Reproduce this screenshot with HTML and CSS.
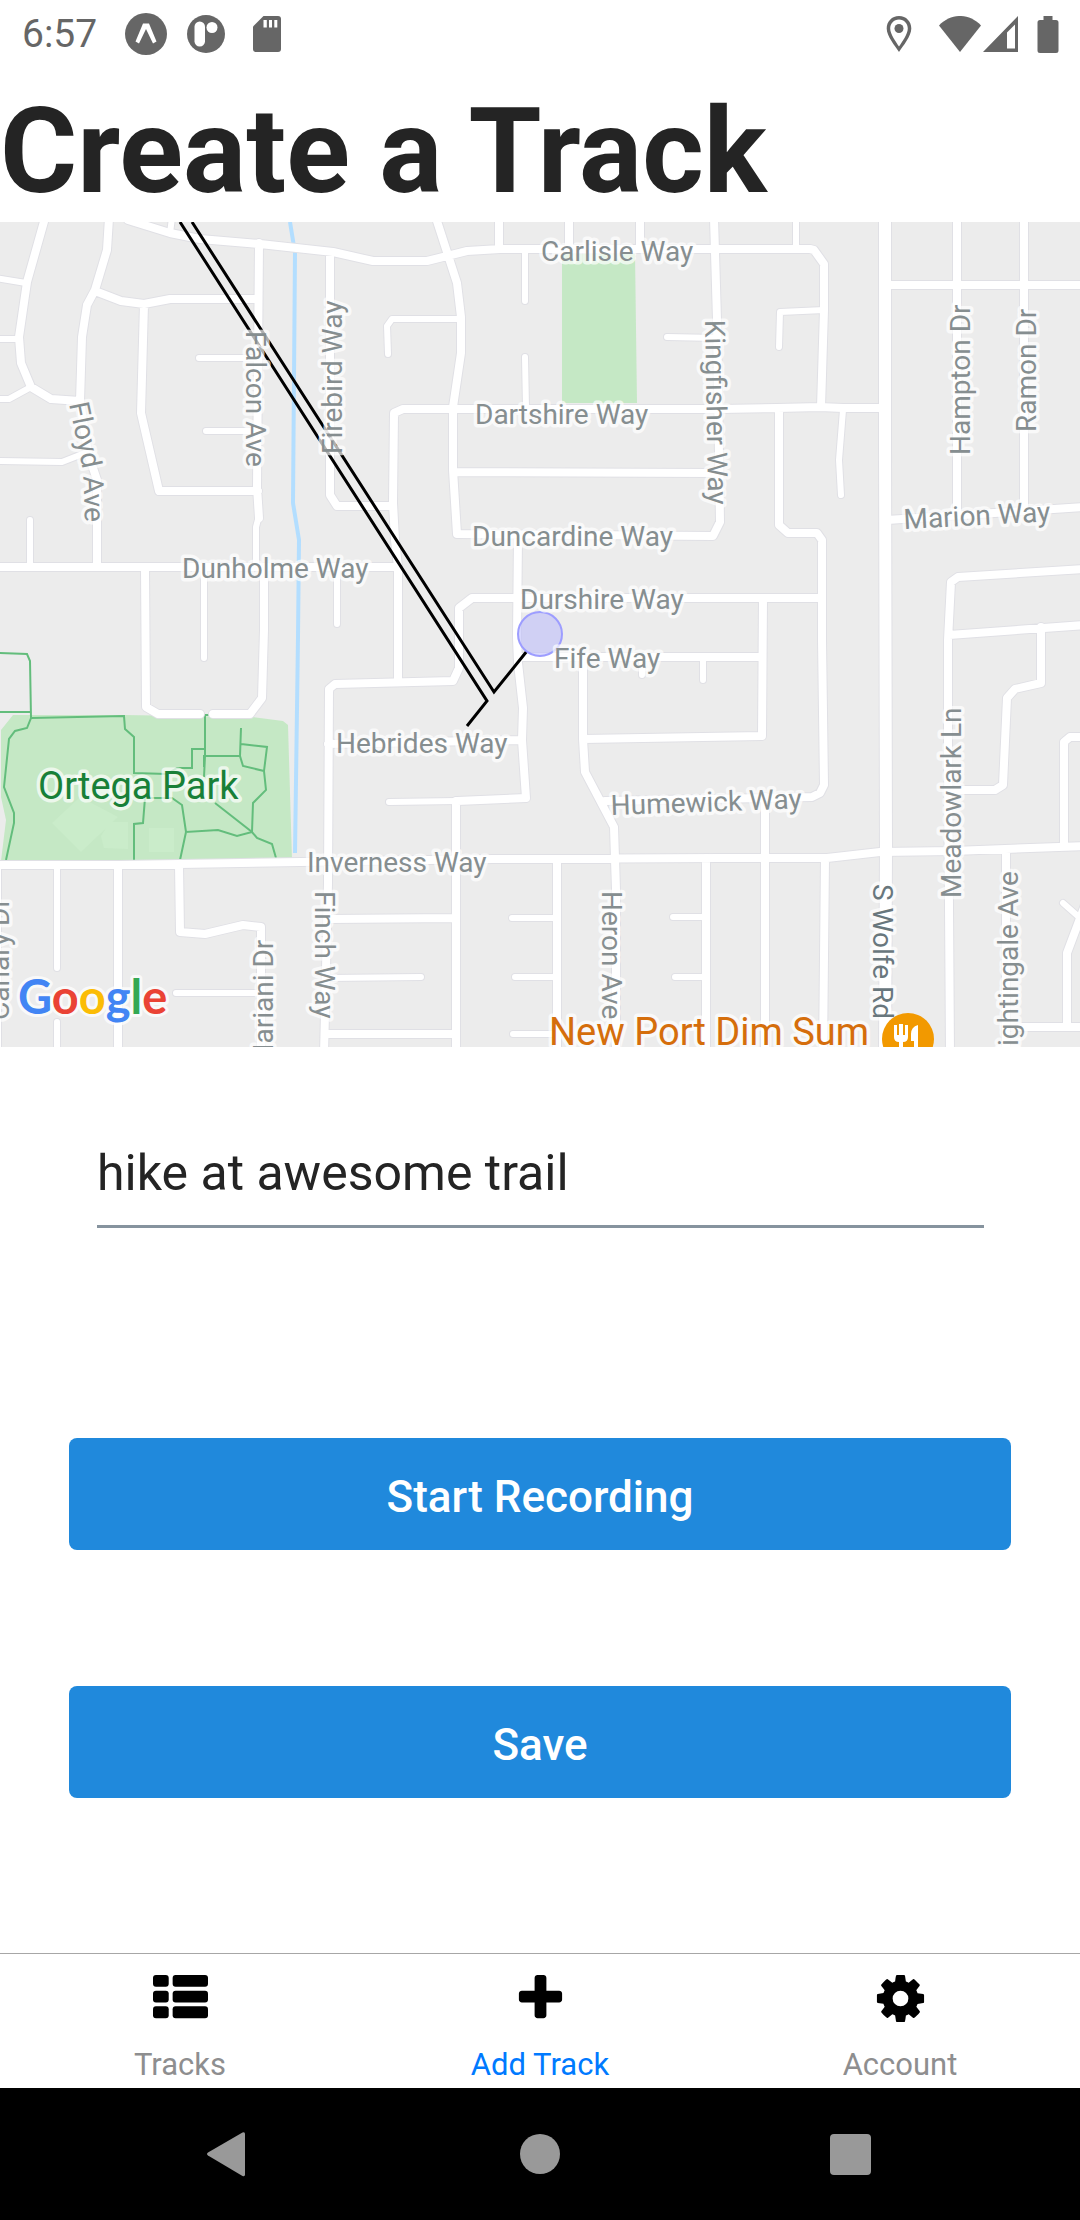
FILE: index.html
```html
<!DOCTYPE html>
<html lang="en">
<head>
<meta charset="utf-8">
<meta name="viewport" content="width=device-width, initial-scale=1">
<title>Create a Track</title>
<link rel="stylesheet" href="styles.css">
</head>
<body>
<header class="status">
  <div class="status-left">
    <span class="clock">6:57</span>
    <svg class="notice" width="42" height="42" viewBox="0 0 42 42" aria-hidden="true"><circle cx="21" cy="21" r="21"/><path class="hole" d="M18 10.500h6l7.500 18-3.500 2-7-14.500-7 14.500-3.500-2z"/></svg>
    <svg class="notice" width="38" height="38" viewBox="0 0 38 38" aria-hidden="true"><circle cx="19" cy="19" r="19"/><rect class="hole" x="7.500" y="6.500" width="10.500" height="25" rx="5.200"/><circle class="hole" cx="25" cy="12.500" r="5.500"/></svg>
    <svg class="notice" width="28" height="36" viewBox="0 0 28 36" aria-hidden="true"><path d="M10.500 0H25a3 3 0 0 1 3 3v30a3 3 0 0 1-3 3H3a3 3 0 0 1-3-3V10.500z"/><path class="hole" d="M10.500 4h3.300v7.500h-3.300zM16 4h3v7.500h-3zM21.300 4h3v7.500h-3z"/></svg>
  </div>
  <div class="status-right">
    <svg width="26" height="36" viewBox="0 0 26 36" aria-hidden="true"><path fill-rule="evenodd" d="M13 0C5.800 0 .700 5.500.700 12.500.700 20 9 30 13 36c4-6 12.300-16 12.300-23.500C25.300 5.500 20.200 0 13 0zm0 3.500c5.200 0 8.800 4 8.800 9C21.800 18 16 26 13 30.500 10 26 4.200 18 4.200 12.500c0-5 3.600-9 8.800-9z"/><circle cx="13" cy="12.500" r="4.500"/></svg>
    <svg class="wifi" width="42" height="36" viewBox="0 0 42 36" aria-hidden="true"><path d="M0 9.500C12-3.200 30-3.200 42 9.500L21 36z"/></svg>
    <svg width="35" height="36" viewBox="0 0 35 36" aria-hidden="true"><path fill-rule="evenodd" d="M35 0v36H0zM32 8.500l-8 8V32.500h8z"/></svg>
    <svg class="battery" width="22" height="37" viewBox="0 0 22 37" aria-hidden="true"><path d="M6.500 0h9v4H19a2.500 2.500 0 0 1 2.500 2.500v28A2.500 2.500 0 0 1 19 37H3a2.500 2.500 0 0 1-2.500-2.500v-28A2.500 2.500 0 0 1 3 4h3.500z"/></svg>
  </div>
</header>

<main class="screen">
  <h1 class="title">Create a Track</h1>

  <svg class="map" viewBox="0 222 1080 825" role="img" aria-label="Map of the recorded track">
    <defs>
      <path id="wide" d="M885 215V440L886 850L885 1055"/>
      <path id="main" d="M128 220L170 233L200 239L260 244L333 252L373 261H427L467 251L500 249H810L814 250L824 264V310L821 407
        M-5 865H118L300 862L493 859L720 858H827L880 852L953 851L1085 846
        M-5 567H398
        M45 218L27 282L19 337L21 363L31 387L51 399L80 401
        M109 218L107 250L95 290L87 305L82 337L80 401L88 453L97 480V567
        M95 291L121 301L144 304L170 299H258
        M144 304L141 413L159 491H258
        M259 243L257 487L259 518
        M330 253V495L337 506H393
        M145 567L146 707L158 714H200
        M213 714H250L262 698L264 630V567
        M436 218L457 283L461 317V353L453 407V470L457 534L713 536L720 522L717 320L714 218
        M499 218V249M569 218V249M640 218V249
        M820 407L843 408H885
        M820 407L777 408L720 409H403L394 413L393 503L395 540L398 567V682
        M454 472L717 473
        M518 536L517 637L518 663L523 708L522 740L526 798L457 801
        M820 598H472L459 608V668L453 681L335 684L329 689L328 883L324 1055
        M518 657H762
        M779 410V525L788 533H817L822 540V640L824 785L820 793L812 797L605 801
        M887 285H1085M957 215V515M1024 215V510M887 520L1085 507
        M1085 569L958 577L951 582L948 640V760L950 1055
        M949 635L1085 625
        M1041 627V683L1015 689L1007 698L1003 785L995 790H950
        M763 598L762 736L583 739
        M583 660V739L585 772L614 827L616 890V1055
        M328 744L522 740
        M118 865V1055
        M179 865L180 932L205 934L243 925L261 927V1055
        M-3 865V1055
        M328 919L456 918M328 1034H456
        M456 801V1055M557 859V1055M706 858V1055
        M765 797V1055M825 858L823 1055M1006 850V1055
        M1064 847V742L1070 737H1085M1085 905L1067 953V1027M1020 1027H1085"/>
      <path id="lane" d="M-5 278L26 283M-5 339H19M31 387L9 399H-5M-5 461L62 462L85 453
        M30 520V567M172 218L170 233M199 358H257M206 431H257M259 516L256 527V567
        M204 567V658M337 567V624M525 250V301M525 357L526 408
        M388 354L387 326L392 319H460M667 337L717 338M389 802L457 801
        M703 658V680M642 658V675M779 347L780 312L824 310
        M843 410L839 460L841 495M796 218V249
        M57 865V968M57 1022V1055M176 993H261M328 978L421 977
        M512 918H557M515 977H557M513 1034H557M673 917H706M675 977H706
        M1063 903L1080 918"/>
    </defs>
    <rect class="land" x="0" y="222" width="1080" height="825"/>
    <path class="park" d="M562 253H635L637 403H562zM1 730L13 715H123L253 717L283 721L288 725L292 860L1 861L6 820L1 797z"/>
    <path class="lawn" d="M52 823L80 797L118 817L81 852zM101 836L110 822H128V849L104 848zM149 828H174V852H149z"/>
    <path class="trail" d="M0 653L27 654L30 661L31 718L27 728L15 731L9 739L4 787L14 813V823L6 860M0 712H31
      M31 718L124 716L125 729L134 737V773L167 774L177 768H192V749H205M205 714V756L204 777
      M204 767V756H240
      M241 728L240 756L243 766L264 771M241 744L267 747L264 771L266 790L253 803L252 832L237 836L218 830L186 832L182 805L172 798H145L143 823L134 824V860
      M186 832L180 860M215 803L252 832L257 838L272 844L276 858M202 715H210"/>
    <path class="water" d="M290 222L295 253L293 503L299 540L298 637L295 853"/>
    <g class="edges"><use href="#wide" class="w-wide"/><use href="#main" class="w-main"/><use href="#lane" class="w-lane"/></g>
    <g class="roads"><use href="#wide" class="w-wide"/><use href="#main" class="w-main"/><use href="#lane" class="w-lane"/></g>
    <path class="track" d="M180 222L487 701L467 726M192 222L494 692L527 651"/>
    <circle class="here" cx="540" cy="634" r="22"/>
    <g class="label">
      <path id="floyd" class="guide" d="M69 404L82 466Q84 478 85 535"/>
      <text x="541" y="261">Carlisle Way</text>
      <text x="475" y="424">Dartshire Way</text>
      <text x="472" y="546">Duncardine Way</text>
      <text x="520" y="609">Durshire Way</text>
      <text x="554" y="668">Fife Way</text>
      <text x="182" y="578">Dunholme Way</text>
      <text x="336" y="753">Hebrides Way</text>
      <text transform="translate(307 872)">Inverness Way</text>
      <text transform="translate(611 815) rotate(-2)">Humewick Way</text>
      <text transform="translate(904 529) rotate(-3)">Marion Way</text>
      <text><textPath href="#floyd">Floyd Ave</textPath></text>
      <text transform="translate(246 331) rotate(90)">Falcon Ave</text>
      <text transform="translate(342 454) rotate(-90)">Firebird Way</text>
      <text transform="translate(705 320) rotate(89)">Kingfisher Way</text>
      <text transform="translate(970 455) rotate(-90)">Hampton Dr</text>
      <text transform="translate(1036 432) rotate(-90)">Ramon Dr</text>
      <text transform="translate(961 898) rotate(-90)">Meadowlark Ln</text>
      <text transform="translate(1018 1066) rotate(-90)">Nightingale Ave</text>
      <text transform="translate(9 1020) rotate(-90)">Canary Dr</text>
      <text transform="translate(273 1068) rotate(-90)">Mariani Dr</text>
      <text transform="translate(315 891) rotate(90)">Finch Way</text>
      <text transform="translate(602 891) rotate(90)">Heron Ave</text>
      <text class="artery" transform="translate(873 884) rotate(90)">S Wolfe Rd</text>
      <text class="park-name" x="38" y="799">Ortega Park</text>
      <text class="place" x="549" y="1045">New Port Dim Sum</text>
    </g>
    <circle class="pin" cx="908" cy="1039" r="26"/>
    <path class="cutlery" d="M894 1025h3v10h2v-11h4v11h2v-10h3v12q0 5-5 5v8h-4v-8q-5 0-5-5zM911 1034q0-7 7-9v25h-4v-9h-3z"/>
    <text class="brand" x="18" y="1014"><tspan class="b">G</tspan><tspan class="r">o</tspan><tspan class="y">o</tspan><tspan class="b">g</tspan><tspan class="g">l</tspan><tspan class="r">e</tspan></text>
  </svg>

  <form class="form">
    <input class="name" type="text" value="hike at awesome trail" aria-label="Track name">
    <button class="action" type="button">Start Recording</button>
    <button class="action" type="button">Save</button>
  </form>
</main>

<nav class="tabs">
  <a class="tab" href="#tracks">
    <svg viewBox="0 0 1792 1792" aria-hidden="true"><rect x="0" y="128" width="512" height="384" rx="96"/><rect x="640" y="128" width="1152" height="384" rx="96"/><rect x="0" y="640" width="512" height="384" rx="96"/><rect x="640" y="640" width="1152" height="384" rx="96"/><rect x="0" y="1152" width="512" height="384" rx="96"/><rect x="640" y="1152" width="1152" height="384" rx="96"/></svg>
    <span>Tracks</span>
  </a>
  <a class="tab current" href="#add">
    <svg viewBox="0 0 1792 1792" aria-hidden="true"><path d="M1600 736v192q0 40-28 68t-68 28h-416v416q0 40-28 68t-68 28h-192q-40 0-68-28t-28-68v-416h-416q-40 0-68-28t-28-68v-192q0-40 28-68t68-28h416v-416q0-40 28-68t68-28h192q40 0 68 28t28 68v416h416q40 0 68 28t28 68z"/></svg>
    <span>Add Track</span>
  </a>
  <a class="tab" href="#account">
    <svg viewBox="0 0 1792 1792" aria-hidden="true"><path d="M1152 896q0-106-75-181t-181-75-181 75-75 181 75 181 181 75 181-75 75-181zm512-109v222q0 12-8 23t-20 13l-185 28q-19 54-39 91 35 50 107 138 10 12 10 25t-9 23q-27 37-99 108t-94 71q-12 0-26-9l-138-108q-44 23-91 38-16 136-29 186-7 28-36 28h-222q-14 0-24.500-8.500t-11.500-21.500l-28-184q-49-16-90-37l-141 107q-10 9-25 9-14 0-25-11-126-114-165-168-7-10-7-23 0-12 8-23 15-21 51-66.500t54-70.500q-27-50-41-99l-183-27q-13-2-21-12.500t-8-23.500v-222q0-12 8-23t19-13l186-28q14-46 39-92-40-57-107-138-10-12-10-24 0-10 9-23 26-36 98.500-107.500t94.500-71.500q13 0 26 10l138 107q44-23 91-38 16-136 29-186 7-28 36-28h222q14 0 24.500 8.500t11.500 21.500l28 184q49 16 90 37l142-107q9-9 24-9 13 0 25 10 129 119 165 170 7 8 7 22 0 12-8 23-15 21-51 66.500t-54 70.500q26 50 41 98l183 28q13 2 21 12.500t8 23.500z"/></svg>
    <span>Account</span>
  </a>
</nav>

<footer class="system">
  <button type="button" aria-label="Back"><svg viewBox="0 0 48 48"><path d="M38.500 2.500L4 22.500q-2 1.500 0 3L38.500 46q2.500 1 2.500-1.500V4q0-2.500-2.500-1.500z"/></svg></button>
  <button type="button" aria-label="Home"><svg viewBox="0 0 48 48"><circle cx="24" cy="24" r="20"/></svg></button>
  <button type="button" aria-label="Recent apps"><svg viewBox="0 0 48 48"><rect x="2" y="4" width="41" height="41" rx="4"/></svg></button>
</footer>
</body>
</html>
```

FILE: styles.css
```css
* {
  box-sizing: border-box;
}

body {
  margin: 0;
  min-height: 100vh;
  display: flex;
  flex-direction: column;
  background: #fff;
  color: #242424;
  font-family: Roboto, "Liberation Sans", sans-serif;
}

svg {
  display: block;
}

/* status bar */
.status {
  display: flex;
  justify-content: space-between;
  height: 66px;
  padding: 0 21px 0 22px;
  color: #666;
  fill: #666;
}

.status-left,
.status-right {
  display: flex;
  align-items: center;
  height: 68px;
}

.status-left {
  gap: 28px;
}

.clock {
  font-size: 39px;
  line-height: 48px;
}

.notice + .notice {
  margin-left: -8px;
}

.notice:last-child {
  margin-left: 0;
}

.hole {
  fill: #fff;
}

.wifi {
  margin: 0 2px 0 27px;
}

.battery {
  margin-left: 19px;
}

/* screen */
.screen {
  flex: 1;
}

.title {
  margin: 0;
  padding: 21px 0 5px;
  font-size: 118px;
  line-height: 130px;
  font-weight: 700;
}

/* map */
.map {
  width: 100%;
  height: auto;
}

.land {
  fill: #ececec;
}

.park {
  fill: #c5e8c5;
}

.lawn {
  fill: #caecca;
}

.trail {
  fill: none;
  stroke: #63bd7c;
  stroke-width: 2;
}

.water {
  fill: none;
  stroke: #b3deff;
  stroke-width: 4;
}

.edges,
.roads {
  fill: none;
  stroke-linecap: round;
  stroke-linejoin: round;
}

.edges {
  stroke: #e0e0e5;
}

.roads {
  stroke: #fff;
}

.edges .w-wide {
  stroke-width: 14px;
}

.edges .w-main {
  stroke-width: 10px;
}

.edges .w-lane {
  stroke-width: 8px;
}

.roads .w-wide {
  stroke-width: 12px;
}

.roads .w-main {
  stroke-width: 8px;
}

.roads .w-lane {
  stroke-width: 6px;
}

.track {
  fill: none;
  stroke: #000;
  stroke-width: 3;
}

.here {
  fill: rgba(190, 190, 250, 0.6);
  stroke: #9d9dff;
  stroke-width: 2;
}

.guide {
  fill: none;
  stroke: none;
}

.label text {
  font-size: 28px;
  fill: #868e90;
  stroke: rgba(255, 255, 255, 0.7);
  stroke-width: 7px;
  stroke-linejoin: round;
  paint-order: stroke;
}

.label .artery {
  fill: #69777d;
}

.label .park-name {
  font-size: 38px;
  fill: #188038;
}

.label .place {
  font-size: 38px;
  fill: #d56e0c;
}

.pin {
  fill: #f29900;
}

.cutlery {
  fill: #fff;
}

.brand {
  font-family: Lato, "Liberation Sans", sans-serif;
  font-size: 47px;
  font-weight: 700;
  stroke: rgba(255, 255, 255, 0.7);
  stroke-width: 6px;
  stroke-linejoin: round;
  paint-order: stroke;
}

.brand .b {
  fill: #4285f4;
}

.brand .r {
  fill: #ea4335;
}

.brand .y {
  fill: #fbbc05;
}

.brand .g {
  fill: #34a853;
}

/* form */
.form {
  display: flex;
  flex-direction: column;
  padding: 68px 69px 0;
}

.name {
  height: 113px;
  margin: 0 27px 210px 28px;
  padding: 6px 0 0;
  border: 0;
  border-bottom: 3px solid #86939e;
  background: none;
  color: #242424;
  font: 50px Roboto, "Liberation Sans", sans-serif;
  outline: 0;
}

.action {
  height: 112px;
  margin: 0 0 136px;
  padding: 6px 0 0;
  border: 0;
  border-radius: 8px;
  background: #2089dc;
  color: #fff;
  font: 500 44px Roboto, "Liberation Sans", sans-serif;
}

/* bottom tabs */
.tabs {
  display: grid;
  grid-template-columns: repeat(3, 1fr);
  border-top: 1px solid #a7a7a7;
}

.tab {
  display: flex;
  flex-direction: column;
  align-items: center;
  gap: 21px;
  padding: 17px 0 5px;
  color: #8e8e8f;
  font-size: 31px;
  line-height: 36px;
  text-decoration: none;
}

.tab svg {
  width: 55px;
  height: 55px;
  fill: #000;
}

.current {
  color: #007aff;
}

/* system navigation */
.system {
  display: grid;
  grid-template-columns: repeat(3, 312px);
  justify-content: center;
  height: 132px;
  background: #000;
}

.system button {
  display: flex;
  align-items: center;
  justify-content: center;
  padding: 0;
  border: 0;
  background: none;
}

.system svg {
  width: 48px;
  height: 48px;
  fill: #999;
}
```
